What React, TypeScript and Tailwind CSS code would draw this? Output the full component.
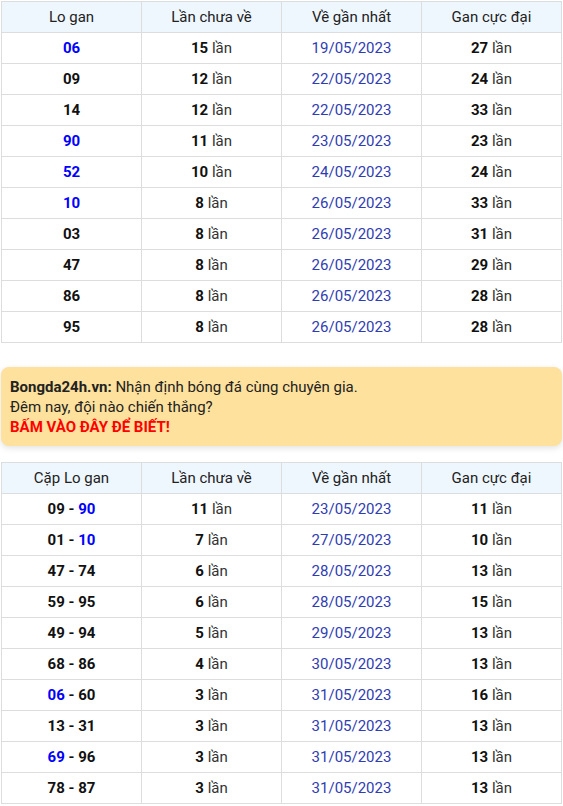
const t1: [string, boolean, number, string, number][] = [
  ["06", true, 15, "19/05/2023", 27],
  ["09", false, 12, "22/05/2023", 24],
  ["14", false, 12, "22/05/2023", 33],
  ["90", true, 11, "23/05/2023", 23],
  ["52", true, 10, "24/05/2023", 24],
  ["10", true, 8, "26/05/2023", 33],
  ["03", false, 8, "26/05/2023", 31],
  ["47", false, 8, "26/05/2023", 29],
  ["86", false, 8, "26/05/2023", 28],
  ["95", false, 8, "26/05/2023", 28],
];

// [a, aBlue, b, bBlue, count, date, max]
const t2: [string, boolean, string, boolean, number, string, number][] = [
  ["09", false, "90", true, 11, "23/05/2023", 11],
  ["01", false, "10", true, 7, "27/05/2023", 10],
  ["47", false, "74", false, 6, "28/05/2023", 13],
  ["59", false, "95", false, 6, "28/05/2023", 15],
  ["49", false, "94", false, 5, "29/05/2023", 13],
  ["68", false, "86", false, 4, "30/05/2023", 13],
  ["06", true, "60", false, 3, "31/05/2023", 16],
  ["13", false, "31", false, 3, "31/05/2023", 13],
  ["69", true, "96", false, 3, "31/05/2023", 13],
  ["78", false, "87", false, 3, "31/05/2023", 13],
];

const th = "border border-[#dddddd] bg-[#eff7fe] h-[31px] font-normal text-center text-[#222]";
const td = "border border-[#dddddd] h-[31px] text-center";

function Num({ v, blue }: { v: string; blue: boolean }) {
  return <span className={blue ? "text-[#0000ff]" : "text-[#111]"}>{v}</span>;
}

function Header({ first }: { first: string }) {
  return (
    <thead>
      <tr>
        <th className={th}>{first}</th>
        <th className={th}>Lần chưa về</th>
        <th className={th}>Về gần nhất</th>
        <th className={th}>Gan cực đại</th>
      </tr>
    </thead>
  );
}

function Lan({ n }: { n: number }) {
  return (
    <>
      <b className="text-[#111]">{n}</b> <span className="text-[#333]">lần</span>
    </>
  );
}

export default function App() {
  return (
    <div
      className="w-[563px] px-[1px] pt-[1px] text-[15px] text-[#222]"
      style={{ fontFamily: "Roboto, 'Liberation Sans', sans-serif" }}
    >
      <table className="w-full table-fixed border-collapse">
        <Header first="Lo gan" />
        <tbody>
          {t1.map(([n, blue, c, d, m]) => (
            <tr key={n}>
              <td className={td + " font-bold"}>
                <Num v={n} blue={blue} />
              </td>
              <td className={td}>
                <Lan n={c} />
              </td>
              <td className={td + " text-[#2f3db3]"}>{d}</td>
              <td className={td}>
                <Lan n={m} />
              </td>
            </tr>
          ))}
        </tbody>
      </table>

      <div className="mt-[24px] rounded-lg bg-[#fde19c] pl-[9px] pt-[10px] pb-[9px] leading-[20px] text-[#222] shadow-[0_2px_6px_rgba(0,0,0,0.12)]">
        <div>
          <b>Bongda24h.vn:</b> Nhận định bóng đá cùng chuyên gia.
        </div>
        <div>Đêm nay, đội nào chiến thắng?</div>
        <div className="font-bold text-[#ff0000]">BẤM VÀO ĐÂY ĐỂ BIẾT!</div>
      </div>

      <table className="mt-[16px] w-full table-fixed border-collapse">
        <Header first="Cặp Lo gan" />
        <tbody>
          {t2.map(([a, ab, b, bb, c, d, m]) => (
            <tr key={a + b}>
              <td className={td + " font-bold"}>
                <Num v={a} blue={ab} /> <span className="text-[#111]">-</span> <Num v={b} blue={bb} />
              </td>
              <td className={td}>
                <Lan n={c} />
              </td>
              <td className={td + " text-[#2f3db3]"}>{d}</td>
              <td className={td}>
                <Lan n={m} />
              </td>
            </tr>
          ))}
        </tbody>
      </table>
    </div>
  );
}
